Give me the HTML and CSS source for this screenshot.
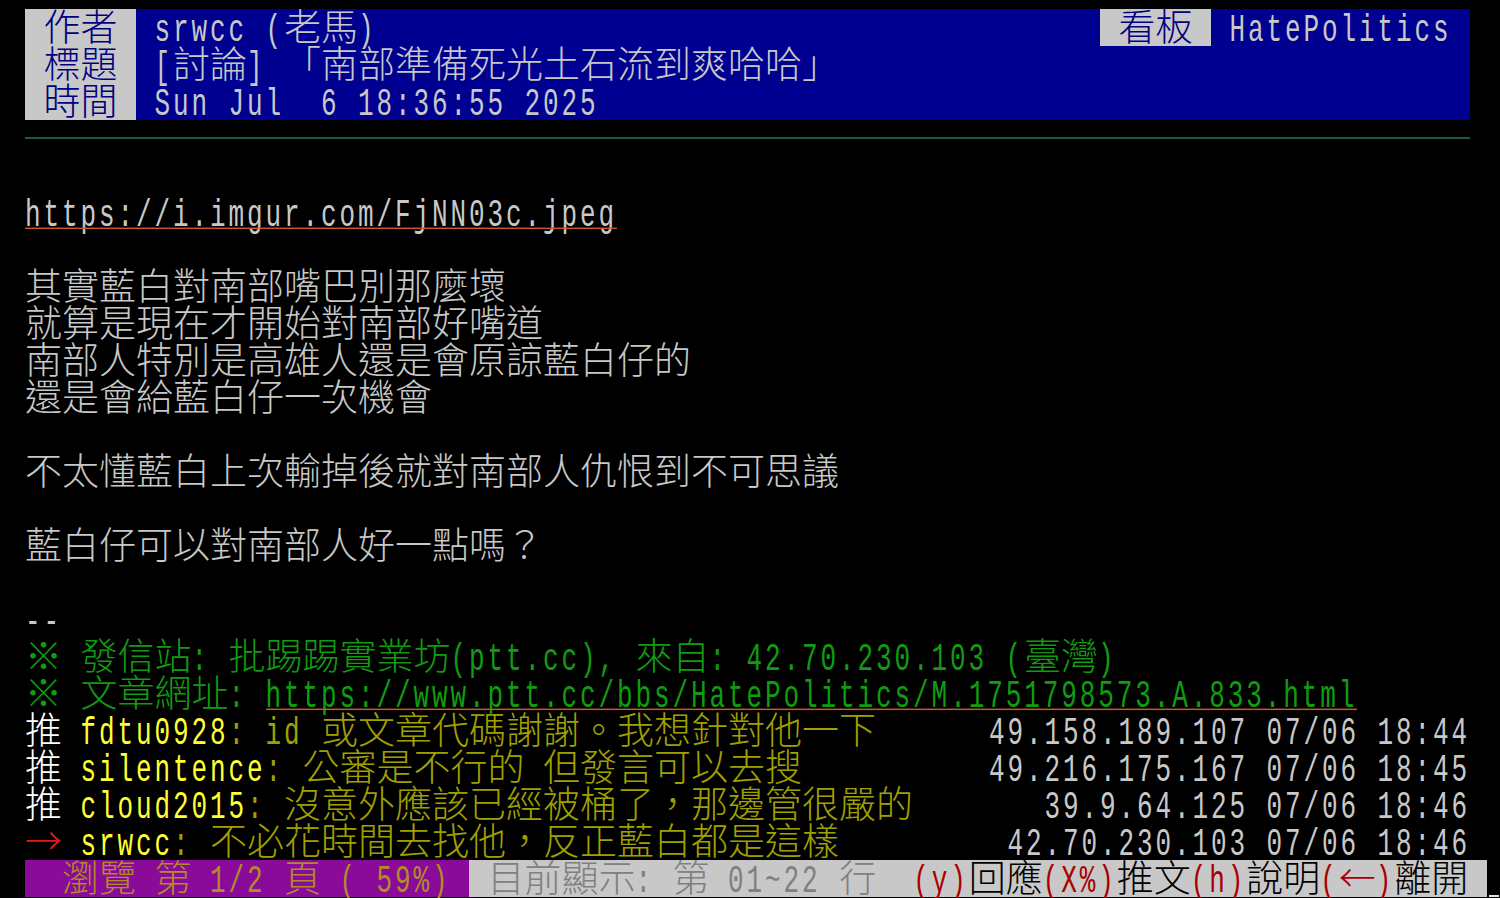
FILE: index.html
```
<!DOCTYPE html>
<html lang="zh-Hant">
<head>
<meta charset="utf-8">
<title>PTT HatePolitics</title>
<link rel="stylesheet" href="styles.css">
</head>
<body>
<div class="term">
  <div class="hdr">
    <div class="lbl">作者</div>
    <div class="val grow"><span class="a">srwcc (</span>老馬<span class="a">)</span></div>
    <div class="lbl">看板</div>
    <div class="val board"><span class="a">HatePolitics</span></div>
  </div>
  <div class="hdr">
    <div class="lbl">標題</div>
    <div class="val grow"><span class="a">[</span>討論<span class="a">] </span>「南部準備死光土石流到爽哈哈」</div>
  </div>
  <div class="hdr">
    <div class="lbl">時間</div>
    <div class="val grow"><span class="a">Sun Jul  6 18:36:55 2025</span></div>
  </div>
  <div class="sep"><div class="sep-line"></div></div>
  <div class="row"></div>
  <div class="row"><span class="a u">https://i.imgur.com/FjNN03c.jpeg</span></div>
  <div class="row"></div>
  <div class="row">其實藍白對南部嘴巴別那麼壞</div>
  <div class="row">就算是現在才開始對南部好嘴道</div>
  <div class="row">南部人特別是高雄人還是會原諒藍白仔的</div>
  <div class="row">還是會給藍白仔一次機會</div>
  <div class="row"></div>
  <div class="row">不太懂藍白上次輸掉後就對南部人仇恨到不可思議</div>
  <div class="row"></div>
  <div class="row">藍白仔可以對南部人好一點嗎？</div>
  <div class="row"></div>
  <div class="row"><span class="a">--</span></div>
  <div class="row green">※<span class="a"> </span>發信站<span class="a">: </span>批踢踢實業坊<span class="a">(ptt.cc), </span>來自<span class="a">: 42.70.230.103 (</span>臺灣<span class="a">)</span></div>
  <div class="row green">※<span class="a"> </span>文章網址<span class="a">: </span><span class="a u">https://www.ptt.cc/bbs/HatePolitics/M.1751798573.A.833.html</span></div>
  <div class="row push">
    <span class="pl"><span class="push-tag">推</span><span class="a"> </span><span class="a uid">fdtu0928</span><span class="msg"><span class="a">: id </span>或文章代碼謝謝。我想針對他一下</span></span>
    <span class="pr"><span class="a">49.158.189.107 07/06 18:44</span></span>
  </div>
  <div class="row push">
    <span class="pl"><span class="push-tag">推</span><span class="a"> </span><span class="a uid">silentence</span><span class="msg"><span class="a">: </span>公審是不行的<span class="a"> </span>但發言可以去搜</span></span>
    <span class="pr"><span class="a">49.216.175.167 07/06 18:45</span></span>
  </div>
  <div class="row push">
    <span class="pl"><span class="push-tag">推</span><span class="a"> </span><span class="a uid">cloud2015</span><span class="msg"><span class="a">: </span>沒意外應該已經被桶了，那邊管很嚴的</span></span>
    <span class="pr"><span class="a">39.9.64.125 07/06 18:46</span></span>
  </div>
  <div class="row push">
    <span class="pl"><span class="arr red">→</span><span class="a"> </span><span class="a uid">srwcc</span><span class="msg"><span class="a">: </span>不必花時間去找他，反正藍白都是這樣</span></span>
    <span class="pr"><span class="a">42.70.230.103 07/06 18:46</span></span>
  </div>
  <div class="status">
    <div class="sb sb-browse"><span class="a">  </span>瀏覽<span class="a"> </span>第<span class="a"> 1/2 </span>頁<span class="a"> ( 59%) </span></div>
    <div class="sb sb-help"><span class="dim"><span class="a"> </span>目前顯示<span class="a">: </span>第<span class="a"> 01~22 </span>行<span class="a">  </span></span><span class="a key">(y)</span>回應<span class="a key">(X%)</span>推文<span class="a key">(h)</span>說明<span class="a key">(</span><span class="arr key">←</span><span class="a key">)</span>離開<span class="a"> </span></div>
    <div class="cursor"></div>
  </div>
</div>
</body>
</html>
```
FILE: styles.css
```
html, body {
  margin: 0;
  padding: 0;
  background: #000;
}
body {
  width: 1500px;
  height: 898px;
  overflow: hidden;
}
.term {
  padding: 9px 0 0 25px;
  font-family: "Noto Sans CJK TC", "Noto Sans CJK SC", sans-serif;
  font-size: 37px;
  line-height: 32px;
  font-weight: 300;
  color: #c8c8c8;
}
.row, .lbl, .val, .sb, .pl, .pr {
  white-space: pre;
}
.row, .hdr, .status, .sep {
  height: 37px;
}
.a {
  display: inline-block;
  font-family: "Liberation Mono", monospace;
  font-size: 26px;
  letter-spacing: 2.9px;
  line-height: 32px;
  font-weight: 400;
  transform: scaleY(1.52);
  transform-origin: 50% 22.9px;
}
.u::after {
  content: "";
  position: absolute;
  left: 0;
  right: 0;
  top: 24px;
  height: 1.3px;
  background: #c4582c;
}
.hdr {
  display: flex;
  width: 1445px;
}
.lbl {
  width: 111px;
  height: 37px;
  text-align: center;
  background: #c8c8c8;
  color: #000080;
}
.val {
  height: 37px;
  background: #000090;
  color: #c8c8c8;
  padding-left: 18.5px;
  box-sizing: border-box;
}
.grow {
  flex: 1;
}
.board {
  width: 259px;
}
.sep {
  box-sizing: border-box;
  padding-top: 17px;
}
.sep-line {
  width: 1445px;
  height: 2px;
  background: #1f554e;
}
.green {
  color: #109c10;
}
.push {
  display: flex;
  justify-content: space-between;
  width: 1445px;
}
.push-tag {
  color: #ffffff;
}
.uid {
  color: #ffff33;
}
.msg {
  color: #a0a000;
}
.arr {
  display: inline-block;
  width: 37px;
  text-align: center;
}
.red {
  color: #e01818;
}
.status {
  display: flex;
}
.sb {
  height: 37px;
}
.sb-browse {
  background: #8a0a9a;
  color: #b08c28;
}
.sb-help {
  background: #c8c8c8;
  color: #000000;
}
.dim {
  color: #808080;
}
.key {
  color: #a80000;
}
.cursor {
  width: 10px;
  height: 37px;
  margin-left: 2px;
  box-sizing: border-box;
  border-bottom: 2px solid #e0e0e0;
}
```
